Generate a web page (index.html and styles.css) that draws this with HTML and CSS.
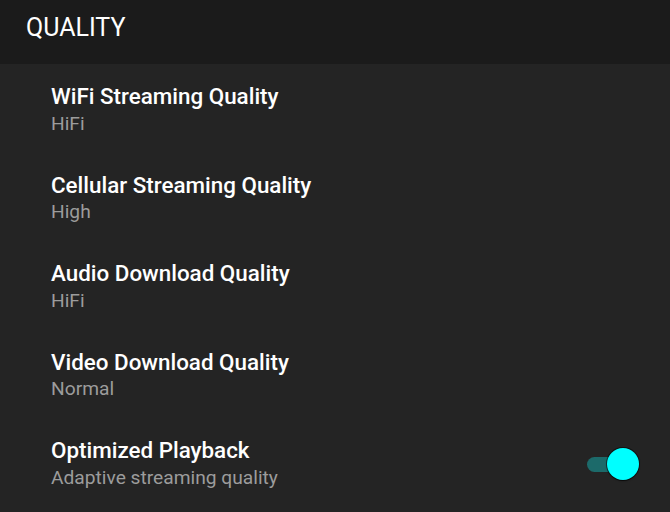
FILE: index.html
```html
<!DOCTYPE html>
<html>
<head>
<meta charset="utf-8">
<link rel="stylesheet" href="styles.css">
</head>
<body>
<header class="header"><h1 class="header-title">QUALITY</h1></header>
<main class="list">
  <div class="row"><div class="text"><div class="title">WiFi Streaming Quality</div><div class="sub">HiFi</div></div></div>
  <div class="row"><div class="text"><div class="title">Cellular Streaming Quality</div><div class="sub">High</div></div></div>
  <div class="row"><div class="text"><div class="title">Audio Download Quality</div><div class="sub">HiFi</div></div></div>
  <div class="row"><div class="text"><div class="title">Video Download Quality</div><div class="sub">Normal</div></div></div>
  <div class="row"><div class="text"><div class="title">Optimized Playback</div><div class="sub">Adaptive streaming quality</div></div>
    <div class="switch"><div class="track"></div><div class="thumb"></div></div>
  </div>
</main>
</body>
</html>
```
FILE: styles.css
```css
html, body { margin: 0; padding: 0; }
body {
  width: 670px; height: 512px; overflow: hidden;
  background: #242424;
  font-family: Roboto, "Noto Sans", sans-serif;
  color: #fff;
}
.header {
  height: 64px; box-sizing: border-box;
  background: #1b1b1b;
  padding: 12.5px 0 0 26px;
}
.header-title {
  margin: 0; font-size: 25px; font-weight: 400; line-height: 30px;
  color: #fff;
}
.list { display: flex; flex-direction: column; }
.row {
  height: 88.5px; box-sizing: border-box;
  padding: 19.2px 31px 0 51px;
  display: flex; align-items: flex-start; justify-content: space-between;
}
.title { font-size: 22.4px; font-weight: 500; line-height: 26px; color: #fff; }
.sub { font-size: 19.2px; line-height: 22px; margin-top: 3.4px; color: #9c9c9c; }
.switch { position: relative; width: 52px; height: 32px; margin-top: 10.7px; }
.track {
  position: absolute; left: 0; top: 9px; width: 46px; height: 15px;
  border-radius: 8px; background: #1c6a6a;
}
.thumb {
  position: absolute; right: 0; top: 0; width: 32px; height: 32px;
  border-radius: 50%; background: #00ffff;
  box-shadow: 0 0 0 1px rgba(0,0,0,0.5), 0 1px 2px rgba(0,0,0,0.4);
}
```
